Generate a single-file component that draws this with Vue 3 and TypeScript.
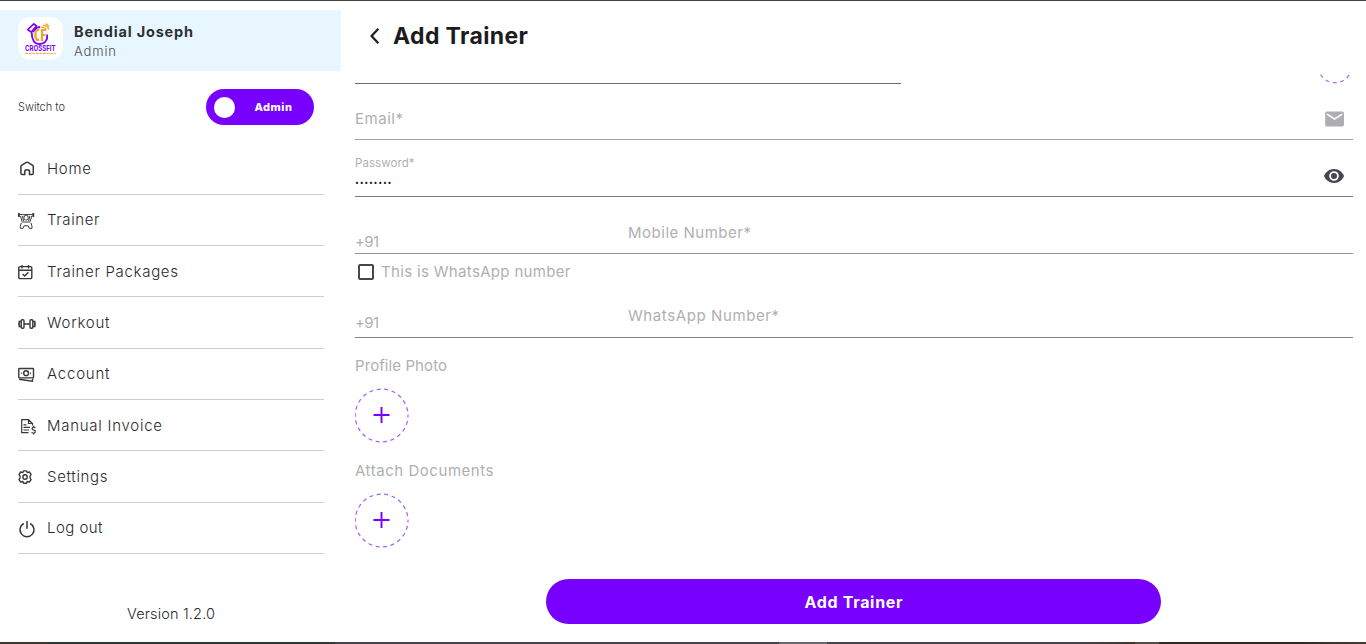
<script setup lang="ts">
import type { Directive } from 'vue'

// Spreads a label's letters so that it takes up the given width in pixels.
const fitWidth = (el: HTMLElement, width: number) => {
  const count = (el.textContent ?? '').trim().length
  el.style.letterSpacing = '0px'
  const natural = el.getBoundingClientRect().width
  const spacing = (width - natural) / Math.max(count - 1, 1)
  el.style.letterSpacing = `${spacing.toFixed(3)}px`
  el.style.marginRight = `${(-spacing).toFixed(3)}px`
}
const vFit: Directive<HTMLElement, number> = {
  mounted: (el, binding) => fitWidth(el, binding.value),
}

interface NavItem {
  id: string
  label: string
  width: number
}

const navItems: NavItem[] = [
  { id: 'home', label: 'Home', width: 44 },
  { id: 'trainer', label: 'Trainer', width: 52.5 },
  { id: 'packages', label: 'Trainer Packages', width: 131 },
  { id: 'workout', label: 'Workout', width: 62.5 },
  { id: 'account', label: 'Account', width: 62.5 },
  { id: 'invoice', label: 'Manual Invoice', width: 115 },
  { id: 'settings', label: 'Settings', width: 60.5 },
  { id: 'logout', label: 'Log out', width: 55.5 },
]

const uploads = [
  { label: 'Profile Photo', width: 92 },
  { label: 'Attach Documents', width: 138.5 },
]
</script>

<template>
  <div class="app">
    <div class="edge-top"></div>
    <div class="body">
      <aside class="sidebar">
        <header class="profile">
          <div class="logo">
            <svg width="45" height="43" viewBox="0 0 45 43">
              <path d="M9.800 12.500 L15.800 6.800 L18.500 9 L13.200 15.200 Z" fill="#fff" stroke="#7700ff" stroke-width="1.700" stroke-linejoin="round" />
              <path d="M13.800 15.500 C13.500 22 16 27 21.800 27 C27 27 29.800 23 29.200 17.500 M14.800 15 L18.500 10.800 L22 10" fill="none" stroke="#7700ff" stroke-width="1.800" />
              <path d="M21 13 H19.200 L17.500 14.800 V20.800 L19.200 22.800 H21 M24 24 V13 H28 M24 18 H27.500" fill="none" stroke="#f5a21d" stroke-width="2.200" />
              <path d="M22.500 10.200 C25.500 9.700 27.500 10.800 28.500 12.500 M25 8.200 C28 8.200 30 9.800 31 12.500 M28 6.500 L31 9.500" fill="none" stroke="#f5a21d" stroke-width="1.200" />
              <text x="7" y="34.300" textLength="30.500" lengthAdjust="spacingAndGlyphs" font-size="7.500" font-weight="700" fill="#7700ff">CROSSFIT</text>
              <path d="M7 36.400 H38" stroke="#f5a21d" stroke-width="0.900" stroke-dasharray="3 0.600" />
            </svg>
          </div>
          <div class="who">
            <span v-fit="119" class="name">Bendial Joseph</span>
            <span v-fit="42" class="role">Admin</span>
          </div>
        </header>

        <div class="switch-row">
          <span v-fit="47" class="switch-label">Switch to</span>
          <div class="toggle">
            <span class="knob"></span>
            <span v-fit="37.5" class="toggle-text">Admin</span>
          </div>
        </div>

        <nav class="nav">
          <a v-for="item in navItems" :key="item.id" class="nav-item">
            <svg class="nav-icon" width="20" height="20" viewBox="0 0 20 20">
              <path v-if="item.id === 'home'" d="M2.900 8.500 Q2.900 7.800 3.500 7.400 L8.300 4.400 Q9.100 4 9.900 4.400 L14.700 7.400 Q15.300 7.800 15.300 8.500 V15.300 Q15.300 16.600 14 16.600 H11.500 V13.200 Q11.500 11.800 9.100 11.800 Q6.800 11.800 6.800 13.200 V16.600 H4.200 Q2.900 16.600 2.900 15.300 Z" stroke-width="1.500" />
              <g v-else-if="item.id === 'trainer'" stroke-width="1">
                <path d="M0.900 3 V7 M15.300 3 V7" stroke-width="1.800" />
                <path d="M1 4.600 H15 M2.500 6 L4 11.500 M13.700 6 L12.200 11.500 M4.500 6 L5.500 11 M11.700 6 L10.700 11 M4 12 H12.200" />
                <rect x="6" y="5.400" width="4.200" height="4.600" rx="1.800" />
                <path d="M3.300 12.800 L2.300 16.500 V18.300 H5 L6 15.800 H10.300 L11.300 18.300 H14 V16.500 L13 12.800" stroke-linejoin="round" />
              </g>
              <g v-else-if="item.id === 'packages'" stroke-width="1.400">
                <rect x="0.800" y="5.600" width="13" height="12" rx="1.200" />
                <path d="M0.800 9.200 H13.800 M4 4 V7.500 M10.500 4 V7.500 M4.600 13 L6.700 15 L10.400 11.200" />
              </g>
              <g v-else-if="item.id === 'workout'" stroke-width="1.400">
                <rect x="3.200" y="7.700" width="2.800" height="8.600" rx="1" />
                <rect x="12" y="7.700" width="2.800" height="8.600" rx="1" />
                <path d="M6 12 H12 M3.200 9.500 H1.200 V14.500 H3.200 M14.800 9.500 H16.800 V14.500 H14.800 M0 12 H1 M17 12 H18" />
              </g>
              <g v-else-if="item.id === 'account'" stroke-width="1.400">
                <rect x="0.800" y="4.500" width="14.700" height="9.400" rx="0.700" />
                <circle cx="8.100" cy="9.200" r="2.400" />
                <path d="M3.300 9.200 H4.200 M12 9.200 H12.900 M1 15.200 L14.300 17.300 L14.700 14.500" />
              </g>
              <g v-else-if="item.id === 'invoice'" stroke-width="1.200">
                <path d="M10.500 17.700 H3.700 V4.600 H10.500 L14.500 8.500 V10.500 M10.500 4.600 V8.500 H14.500 M5.500 9.800 H8.500 M5.500 12.300 H12 M5.500 15 H11" />
                <path d="M17.500 12.800 Q15 11.500 14 13.200 Q14 14.700 15.800 15.100 Q18 15.800 17 17.500 Q15.500 18.800 13.500 17.500 M15.700 10.700 V12.200 M15.700 18.200 V19.600" />
              </g>
              <g v-else-if="item.id === 'settings'" stroke-width="1.400">
                <path d="M5.600 4.900 H8.500 L9.200 6.600 L11.400 6 L13.100 8.300 L12.100 10 V12 L13.100 13.700 L11.400 16.100 L9.200 15.500 L8.500 17.200 H5.600 L4.900 15.500 L2.700 16.100 L1 13.700 L2 12 V10 L1 8.300 L2.700 6 L4.900 6.600 Z" stroke-linejoin="round" />
                <circle cx="7.050" cy="11" r="2.200" />
              </g>
              <path v-else d="M5.800 5.500 A7 7 0 1 0 12.200 5.500 M9 3 V10.800" stroke-width="1.500" />
            </svg>
            <span v-fit="item.width" class="nav-label">{{ item.label }}</span>
          </a>
        </nav>

        <footer class="version"><span v-fit="88">Version 1.2.0</span></footer>
      </aside>

      <main class="main">
        <header class="title-bar">
          <svg width="14" height="20" viewBox="0 0 14 20">
            <path d="M10.300 2.800 L3.600 10 L10.300 17.200" fill="none" stroke="#1c1b1f" stroke-width="2.200" />
          </svg>
          <h1><span v-fit="135">Add Trainer</span></h1>
        </header>

        <section class="form">
          <div class="partial-row">
            <div class="partial-field"></div>
            <svg class="partial-ring" width="36" height="12" viewBox="0 0 36 12">
              <circle cx="18" cy="-6" r="16.700" fill="none" stroke="#a06bfa" stroke-width="1.200" stroke-dasharray="4 3.500" stroke-dashoffset="5.700" />
            </svg>
          </div>

          <div class="field email">
            <span v-fit="48" class="hint">Email*</span>
            <svg width="20" height="16" viewBox="0 0 20 16">
              <rect x="0.200" y="0.500" width="18.800" height="15" rx="1.800" fill="#aeaeb0" />
              <path d="M2 3.100 L9.600 8 L17.200 3.100" fill="none" stroke="#fff" stroke-width="1.500" />
            </svg>
          </div>

          <div class="field password">
            <div class="stack">
              <span v-fit="59.5" class="small-label">Password*</span>
              <span v-fit="36.5" class="dots">••••••••</span>
            </div>
            <svg width="22" height="16" viewBox="0 0 22 16">
              <path d="M11 1 C6.500 1 2.500 3.800 1 8 C2.500 12.200 6.500 14.900 11 14.900 C15.500 14.900 19.500 12.200 21 8 C19.500 3.800 15.500 1 11 1 Z" fill="#49454f" />
              <circle cx="11" cy="8" r="3.900" fill="#49454f" stroke="#fff" stroke-width="1.800" />
            </svg>
          </div>

          <div class="field phone mobile">
            <span v-fit="24" class="code">+91</span>
            <span v-fit="123" class="hint">Mobile Number*</span>
          </div>

          <label class="check">
            <span class="box"></span>
            <span v-fit="189.5" class="hint">This is WhatsApp number</span>
          </label>

          <div class="field phone whatsapp">
            <span v-fit="24" class="code">+91</span>
            <span v-fit="151" class="hint">WhatsApp Number*</span>
          </div>

          <div v-for="u in uploads" :key="u.label" class="upload">
            <span v-fit="u.width" class="hint">{{ u.label }}</span>
            <svg width="54" height="55" viewBox="0 0 54 55">
              <circle cx="26.600" cy="27.500" r="26.400" fill="none" stroke="#9a63fa" stroke-width="1.200" stroke-dasharray="4 3.540" stroke-dashoffset="2" />
              <path d="M18.500 27 H34.500 M26.500 19 V35" stroke="#7700ff" stroke-width="1.900" />
            </svg>
          </div>
        </section>

        <button class="submit"><span v-fit="98">Add Trainer</span></button>
      </main>
    </div>
    <div class="edge-bottom"></div>
  </div>
</template>

<style>
body {
  margin: 0;
  background: #fff;
}
</style>

<style scoped>
.app {
  width: 1366px;
  height: 644px;
  overflow: hidden;
  display: flex;
  flex-direction: column;
  background: #fff;
  font-family: Inter, "Open Sans", "Liberation Sans", sans-serif;
  white-space: nowrap;
}
.app * {
  box-sizing: border-box;
}
svg {
  display: block;
  flex: none;
}
.edge-top {
  height: 1px;
  background: #444;
}
.edge-bottom {
  height: 2px;
  background: linear-gradient(90deg, #3d3b2c 0 48px, #303633 48px 335px, #454547 335px 779px, #69696b 779px 827px, #454547 827px 1080px, #3c3430 1135px, #5a4a3e 1135px 1159px, #38291f 1159px 1300px, #493a2b 1366px);
}
.body {
  height: 641px;
  display: flex;
}

.sidebar {
  width: 342px;
  padding-top: 9px;
  display: flex;
  flex-direction: column;
}
.profile {
  height: 61.4px;
  width: 341.4px;
  padding: 7px 18px 0;
  display: flex;
  gap: 11px;
  background: #e8f6ff;
}
.logo {
  width: 45px;
  height: 43px;
  border-radius: 12px;
  background: #fff;
}
.who {
  display: flex;
  flex-direction: column;
  align-items: flex-start;
  padding-top: 5px;
}
.name {
  font-size: 14.5px;
  line-height: 20px;
  font-weight: 700;
  color: #2c3034;
}
.role {
  font-size: 13px;
  line-height: 19px;
  font-weight: 300;
  color: #4c5054;
}
.switch-row {
  height: 72px;
  padding: 0 27.6px 0 18px;
  display: flex;
  align-items: center;
  justify-content: space-between;
}
.switch-label {
  font-size: 11px;
  font-weight: 300;
  color: #333;
}
.toggle {
  width: 108px;
  height: 36px;
  padding: 0 22.500px 0 7.600px;
  border-radius: 18px;
  display: flex;
  align-items: center;
  justify-content: space-between;
  background: #7700ff;
}
.knob {
  width: 20.5px;
  height: 20.5px;
  border-radius: 50%;
  background: #fff;
}
.toggle-text {
  font-size: 11px;
  font-weight: 800;
  color: #fff;
}
.nav {
  padding: 0 18px;
}
.nav-item {
  height: 51.330px;
  display: flex;
  align-items: flex-start;
  gap: 9px;
  border-bottom: 1px solid #ceccd6;
}
.nav-icon {
  margin-top: 15px;
  fill: none;
  stroke: #38383a;
}
.nav-label {
  margin-top: 13.5px;
  font-size: 15px;
  line-height: 24px;
  font-weight: 300;
  color: #2a2a2c;
}
.version {
  margin-top: 48px;
  text-align: center;
  font-size: 14.5px;
  line-height: 24px;
  font-weight: 300;
  color: #2a2a2c;
}
.version span,
.submit span,
h1 span {
  display: inline-block;
}

.main {
  flex: 1;
  padding: 0 13px;
  display: flex;
  flex-direction: column;
}
.title-bar {
  height: 71px;
  padding: 0 0 2px 13px;
  display: flex;
  align-items: center;
  gap: 11px;
}
h1 {
  margin: 0;
  font-size: 23px;
  line-height: 30px;
  font-weight: 700;
  color: #1c1b1f;
}
.form {
  height: 507px;
}
.hint,
.code {
  font-size: 15px;
  line-height: 22px;
  font-weight: 400;
  color: #b0b0b0;
}
.partial-row {
  height: 12px;
  display: flex;
  justify-content: space-between;
}
.partial-field {
  width: 546.4px;
  border-bottom: 1px solid #6d6d70;
}
.field {
  width: 998px;
  display: flex;
  justify-content: space-between;
}
.field.email {
  height: 56px;
  padding: 24px 8px 0 0;
  align-items: flex-start;
  border-bottom: 1px solid #a2a2a4;
}
.field.email svg {
  margin-top: 3px;
}
.field.password {
  height: 57px;
  padding: 15px 8px 0 0;
  border-bottom: 1px solid #7c7783;
}
.field.password svg {
  margin-top: 12.5px;
}
.stack {
  display: flex;
  flex-direction: column;
  align-items: flex-start;
}
.small-label {
  font-size: 11.5px;
  line-height: 16px;
  color: #b0b0b0;
}
.dots {
  margin-top: 3px;
  font-size: 7px;
  line-height: 17px;
  color: #1c1b1f;
}
.field.phone {
  justify-content: flex-start;
}
.phone .hint {
  margin-left: 249px;
}
.field.mobile {
  height: 57px;
  padding-top: 25px;
  border-bottom: 1px solid #949399;
}
.mobile .code {
  margin-top: 9px;
}
.check {
  height: 36px;
  display: flex;
  align-items: center;
  gap: 7px;
}
.box {
  width: 16px;
  height: 16px;
  margin-left: 3px;
  border: 2px solid #49454f;
  border-radius: 2px;
}
.field.whatsapp {
  height: 48px;
  padding-top: 15px;
  border-bottom: 1px solid #858389;
}
.whatsapp .code {
  margin-top: 7px;
}
.upload {
  height: 105px;
  padding-top: 17px;
  display: flex;
  flex-direction: column;
  align-items: flex-start;
  gap: 10.8px;
}
.submit {
  width: 615px;
  height: 45px;
  margin-left: 191px;
  padding: 0;
  border: 0;
  border-radius: 23px;
  background: #7700ff;
  color: #fff;
  font-family: inherit;
  font-size: 16px;
  font-weight: 700;
}
</style>
